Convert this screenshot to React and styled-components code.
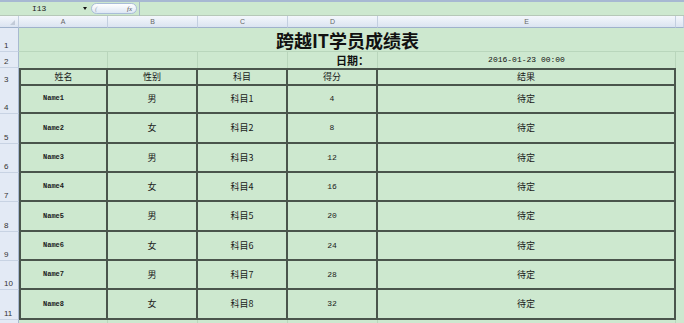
import styled, { createGlobalStyle } from "styled-components";

const Global = createGlobalStyle`
  * { margin: 0; padding: 0; box-sizing: border-box; }
  body { background: #cde8cf; font-family: "Noto Sans CJK SC", sans-serif; overflow: hidden; }
`;

const COLS = "19px 89px 90px 90px 90px 298px 8px";
const GREEN = "#cde8cf";
const GRID = "#b9d6bc";
const LINE = "#4a554c";

const Page = styled.div`
  width: 684px;
  height: 323px;
  overflow: hidden;
  display: flex;
  flex-direction: column;
  background: ${GREEN};
`;

const TopEdge = styled.div`
  flex-shrink: 0;
  height: 2px;
  background: #a7b8d2;
`;

const FormulaBar = styled.div`
  flex-shrink: 0;
  height: 14px;
  display: flex;
  align-items: center;
  border-bottom: 1px solid #b6c8b8;
`;

const NameBox = styled.div`
  width: 80px;
  padding-left: 32px;
  font: 8px "Liberation Mono", monospace;
  color: #222;
`;

const Arrow = styled.div`
  width: 0;
  height: 0;
  margin-left: 3px;
  border-left: 2px solid transparent;
  border-right: 2px solid transparent;
  border-top: 3px solid #111;
`;

const Pill = styled.div`
  margin-left: 4px;
  width: 46px;
  height: 11px;
  border-radius: 6px;
  border: 1px solid #a9bdd8;
  background: linear-gradient(#ffffff, #dde7f4);
  display: flex;
  align-items: center;
  justify-content: space-between;
  padding: 0 4px 0 3px;
  font: italic 7px "Liberation Serif", serif;
  color: #555;
`;

const Sep = styled.div`
  width: 1px;
  height: 14px;
  margin-left: 2px;
  background: #a7b8c8;
`;

const Row = styled.div`
  flex-shrink: 0;
  display: grid;
  grid-template-columns: ${COLS};
  height: ${(p) => p.$h}px;
`;

const ColHead = styled.div`
  background: linear-gradient(#f4f7fc, #dbe4f1);
  border-right: 1px solid #c3cfe0;
  border-bottom: 1px solid #9fb2cc;
  font: 7px "Liberation Sans", sans-serif;
  color: #666;
  display: flex;
  align-items: center;
  justify-content: center;
`;

const Corner = styled(ColHead)`
  position: relative;
  &::after {
    content: "";
    position: absolute;
    right: 3px;
    bottom: 2px;
    border-left: 5px solid transparent;
    border-bottom: 5px solid #c2cbd8;
  }
`;

const RowHead = styled.div`
  background: #e3eaf5;
  border-right: 1px solid #a8b9d0;
  border-bottom: 1px solid #c8d3e3;
  font: 8px "Liberation Sans", sans-serif;
  color: #333;
  display: flex;
  align-items: flex-end;
  padding: 0 0 1px 4px;
`;

const Blank = styled.div`
  border-right: 1px solid ${GRID};
  border-bottom: 1px solid ${GRID};
`;

const Title = styled.div`
  grid-column: 2 / 7;
  border-bottom: 1px solid ${GRID};
  display: flex;
  align-items: center;
  justify-content: center;
  font: 700 18px "Noto Sans CJK SC", sans-serif;
  line-height: 1;
  color: #111;
`;

const Plain = styled.div`
  border-right: 1px solid ${GRID};
  display: flex;
  align-items: center;
  justify-content: ${(p) => (p.$right ? "flex-end" : "center")};
  padding-right: ${(p) => (p.$right ? 8 : 0)}px;
  font: ${(p) => (p.$bold ? "700 11px" : "400 8px")} ${(p) => (p.$mono ? '"Liberation Mono", monospace' : '"Noto Sans CJK SC", sans-serif')};
  line-height: 1;
  color: #111;
`;

const Cell = styled.div`
  border-right: 2px solid ${LINE};
  border-bottom: 2px solid ${LINE};
  border-top: ${(p) => (p.$top ? `2px solid ${LINE}` : "none")};
  border-left: ${(p) => (p.$left ? `2px solid ${LINE}` : "none")};
  display: flex;
  align-items: center;
  justify-content: center;
  font: ${(p) => (p.$mono ? '700 7px "Liberation Mono", monospace' : '400 9px "Noto Sans CJK SC", sans-serif')};
  color: #1a1a1a;
  padding-bottom: 1px;
  padding-right: ${(p) => p.$shift || 0}px;
`;

const Tail = styled.div`
  border-bottom: 1px solid ${GRID};
`;

const rows = [
  ["Name1", "男", "科目1", "4"],
  ["Name2", "女", "科目2", "8"],
  ["Name3", "男", "科目3", "12"],
  ["Name4", "女", "科目4", "16"],
  ["Name5", "男", "科目5", "20"],
  ["Name6", "女", "科目6", "24"],
  ["Name7", "男", "科目7", "28"],
  ["Name8", "女", "科目8", "32"],
];

const heights = [29, 30, 29, 29, 30, 29, 29, 30];

export default function App() {
  return (
    <Page>
      <Global />
      <TopEdge />
      <FormulaBar>
        <NameBox>I13</NameBox>
        <Arrow />
        <Pill>
          <span style={{ color: "#9ab" }}>(</span>
          <span>fx</span>
        </Pill>
        <Sep />
      </FormulaBar>

      <Row $h={12}>
        <Corner />
        {["A", "B", "C", "D", "E"].map((c) => (
          <ColHead key={c}>{c}</ColHead>
        ))}
        <ColHead />
      </Row>

      <Row $h={24}>
        <RowHead>1</RowHead>
        <Title>跨越IT学员成绩表</Title>
        <Blank style={{ borderRight: "none" }} />
      </Row>

      <Row $h={16}>
        <RowHead>2</RowHead>
        <Plain />
        <Plain />
        <Plain />
        <Plain $right $bold>日期：</Plain>
        <Plain $mono>2016-01-23 00:00</Plain>
        <div />
      </Row>

      <Row $h={17}>
        <RowHead>3</RowHead>
        <Cell $top $left>姓名</Cell>
        <Cell $top>性别</Cell>
        <Cell $top>科目</Cell>
        <Cell $top>得分</Cell>
        <Cell $top>结果</Cell>
        <div />
      </Row>

      {rows.map((r, i) => (
        <Row $h={heights[i]} key={r[0]}>
          <RowHead>{i + 4}</RowHead>
          <Cell $left $mono $shift={20}>{r[0]}</Cell>
          <Cell>{r[1]}</Cell>
          <Cell>{r[2]}</Cell>
          <Cell $mono style={{ fontWeight: 400, fontSize: 8 }}>{r[3]}</Cell>
          <Cell>待定</Cell>
          <div />
        </Row>
      ))}

      <Row $h={10}>
        <RowHead />
        <Blank />
        <Blank />
        <Blank />
        <Blank />
        <Blank />
        <Tail />
      </Row>
    </Page>
  );
}
